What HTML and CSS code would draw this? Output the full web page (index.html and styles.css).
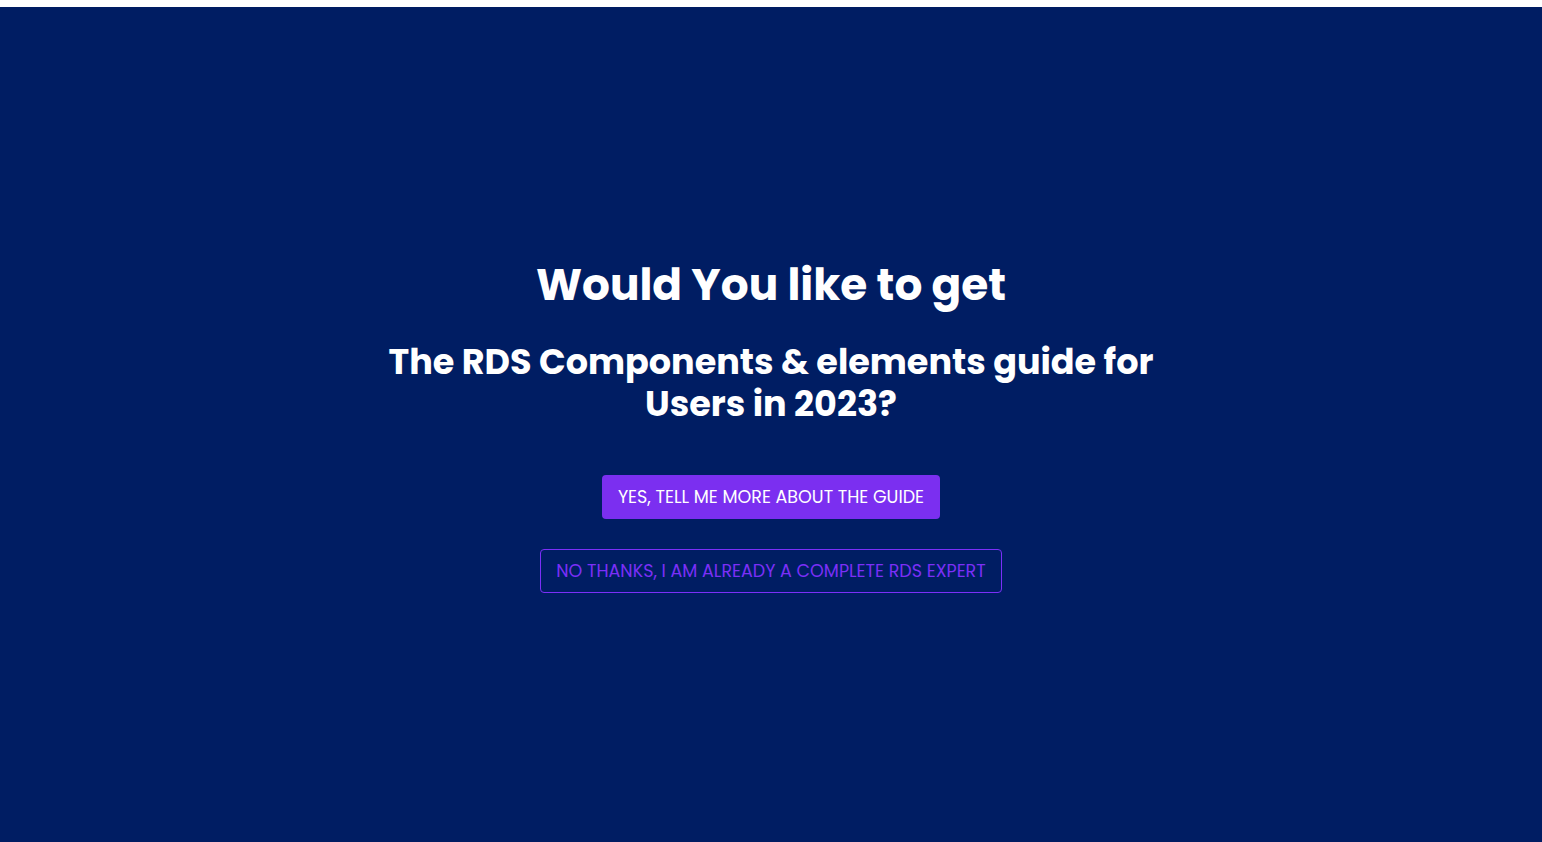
FILE: index.html
```html
<!DOCTYPE html>
<html lang="en">
<head>
<meta charset="utf-8">
<title>RDS Guide</title>
<link rel="stylesheet" href="styles.css">
</head>
<body>
<main class="page">
  <section class="prompt">
    <h1 class="prompt-title">Would You like to get</h1>
    <h2 class="prompt-subtitle">The RDS Components &amp; elements guide for<br>Users in 2023?</h2>
    <div class="prompt-actions">
      <button class="btn btn-primary" type="button">YES, TELL ME MORE ABOUT THE GUIDE</button>
      <button class="btn btn-outline" type="button">NO THANKS, I AM ALREADY A COMPLETE RDS EXPERT</button>
    </div>
  </section>
</main>
</body>
</html>
```

FILE: styles.css
```css
html, body {
  margin: 0;
  padding: 0;
}
body {
  background: #ffffff;
  padding-top: 7px;
  font-family: "Poppins", "Inter", "Noto Sans", sans-serif;
}
.page {
  background: #001d63;
  min-height: calc(100vh - 7px);
  padding-top: 3px;
  display: flex;
  flex-direction: column;
  align-items: center;
  justify-content: center;
  box-sizing: border-box;
}
.prompt {
  display: flex;
  flex-direction: column;
  align-items: center;
  text-align: center;
  color: #ffffff;
}
.prompt-title {
  margin: 0;
  font-size: 43.8px;
  line-height: 50px;
  font-weight: 700;
}
.prompt-subtitle {
  margin: 31px 0 0;
  font-size: 35px;
  line-height: 42px;
  font-weight: 700;
}
.prompt-actions {
  margin-top: 50px;
  display: flex;
  flex-direction: column;
  align-items: center;
  gap: 30px;
}
.btn {
  font-family: inherit;
  font-size: 17.5px;
  height: 44px;
  padding: 0 16px;
  border-radius: 4px;
  cursor: pointer;
  box-sizing: border-box;
}
.btn-primary {
  background: #7b2ff0;
  color: #ffffff;
  border: none;
}
.btn-outline {
  background: transparent;
  color: #7b2ff7;
  border: 1px solid #7b2ff7;
  padding: 0 15px;
}
```
